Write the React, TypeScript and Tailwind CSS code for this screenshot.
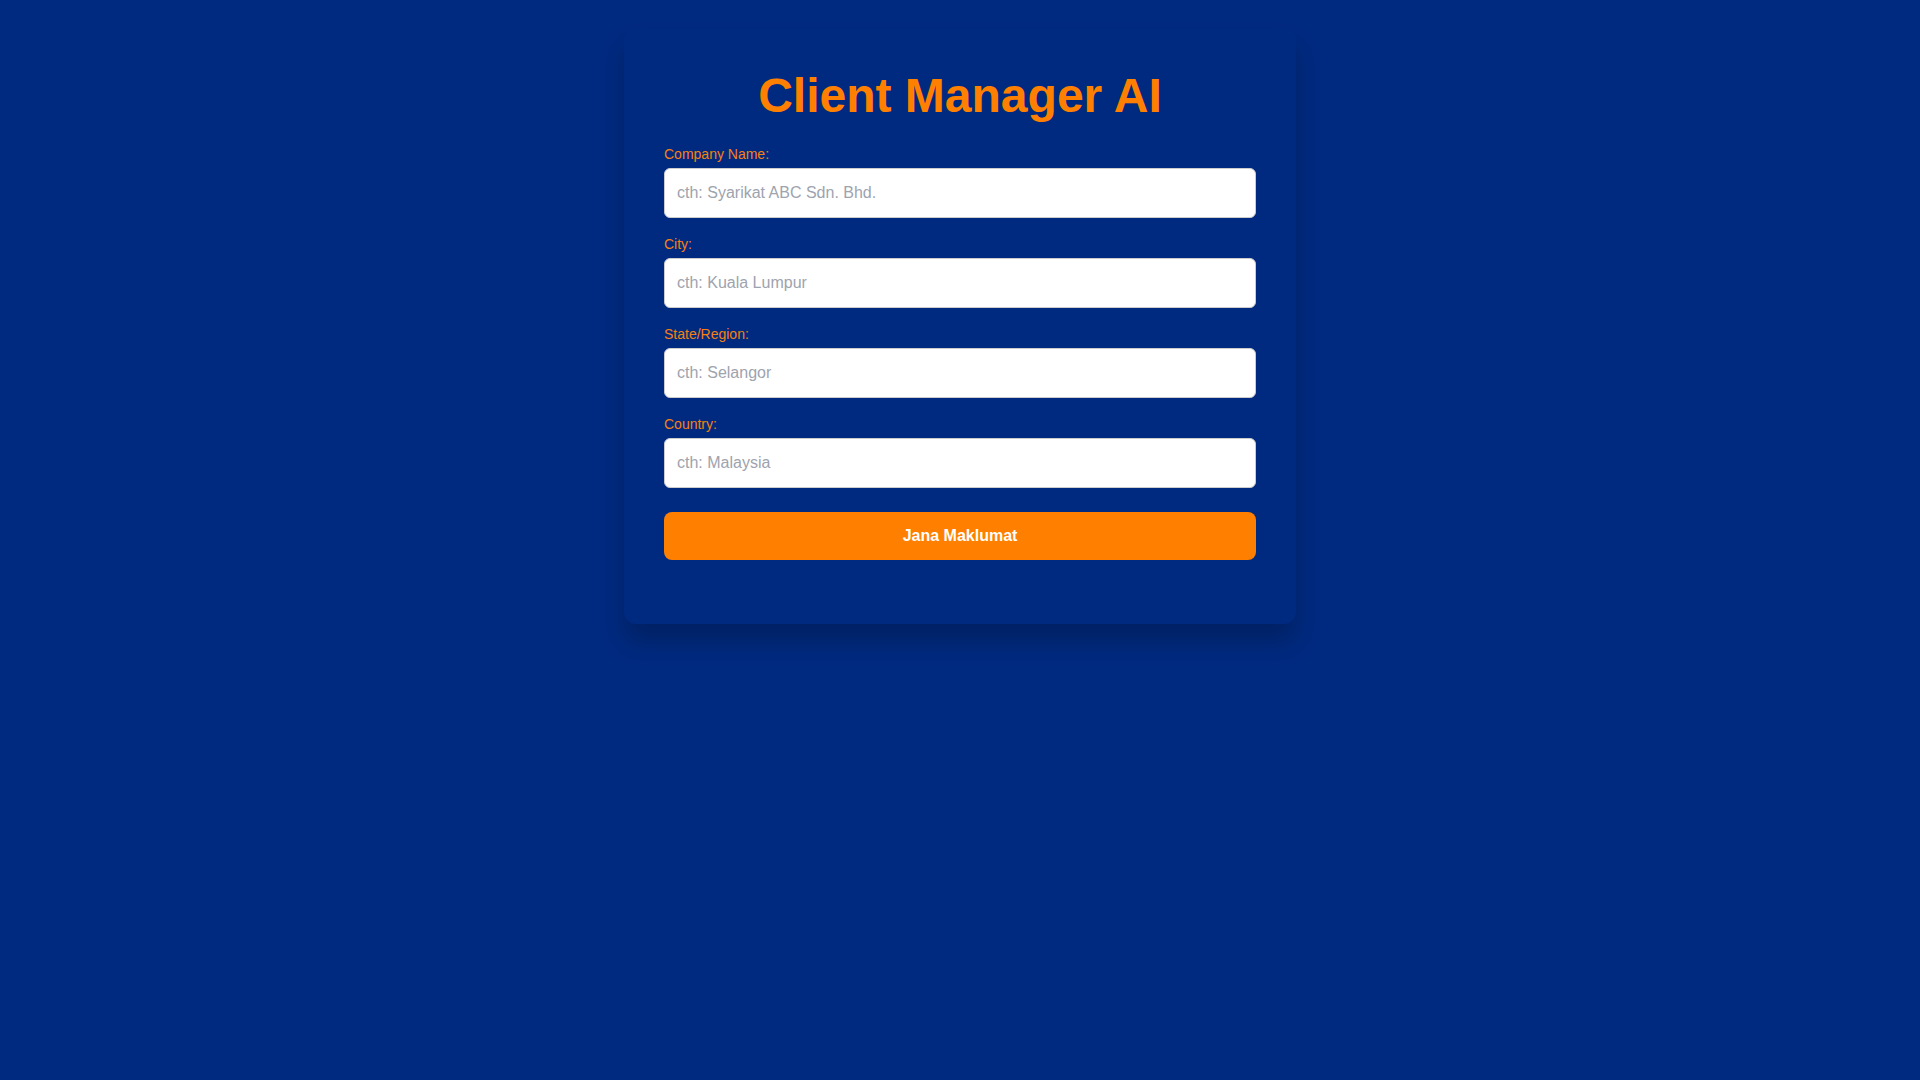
import { useState } from 'react';

const fields = [
  { id: 'company', label: 'Company Name:', placeholder: 'cth: Syarikat ABC Sdn. Bhd.' },
  { id: 'city', label: 'City:', placeholder: 'cth: Kuala Lumpur' },
  { id: 'state', label: 'State/Region:', placeholder: 'cth: Selangor' },
  { id: 'country', label: 'Country:', placeholder: 'cth: Malaysia' },
];

export default function App() {
  const [values, setValues] = useState<Record<string, string>>({});

  return (
    <div className="min-h-screen bg-[#002a80] pt-[28px] font-['Liberation_Sans',Arial,sans-serif]">
      <div className="mx-auto w-full max-w-2xl rounded-xl bg-[#002a80] px-10 pt-10 pb-[64px] shadow-[0_18px_24px_rgba(0,0,0,0.22)]">
        <h1 className="mb-5 text-center text-5xl leading-[1.15] font-bold text-[#ff8000]">Client Manager AI</h1>
        {fields.map((f) => (
          <div key={f.id} className="mb-[15px]">
            <label htmlFor={f.id} className="mb-[4px] block pt-px text-sm text-[#f78012]">
              {f.label}
            </label>
            <input
              id={f.id}
              type="text"
              value={values[f.id] ?? ''}
              onChange={(e) => setValues({ ...values, [f.id]: e.target.value })}
              placeholder={f.placeholder}
              className="block h-[50px] w-full rounded-md border border-[#cccccc] bg-white px-3 text-base text-gray-800 outline-none placeholder:text-[#9ea3ae]"
            />
          </div>
        ))}
        <button className="mt-[9px] h-12 w-full rounded-lg bg-[#ff8000] text-base font-bold text-white hover:bg-[#e67300]">
          Jana Maklumat
        </button>
      </div>
    </div>
  );
}
